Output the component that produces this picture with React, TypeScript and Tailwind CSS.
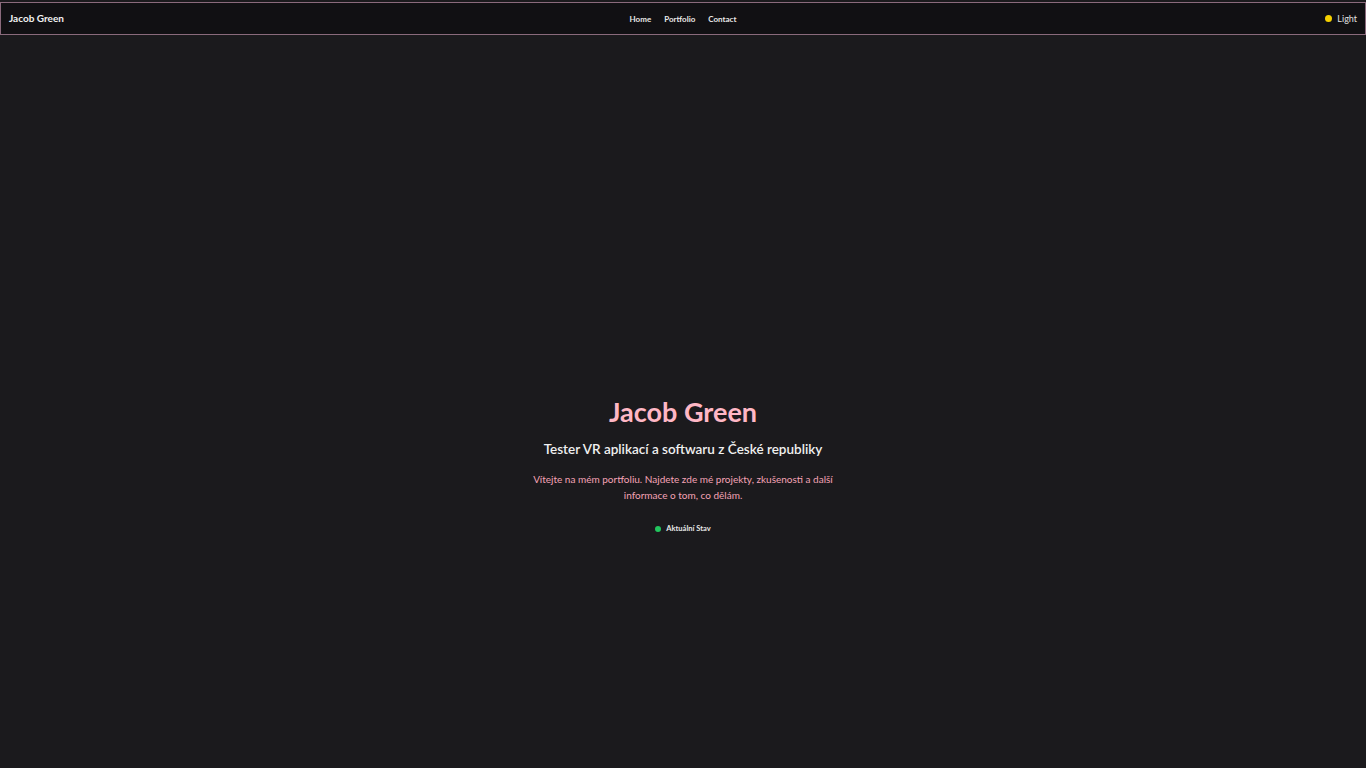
const links = ["Home", "Portfolio", "Contact"]

export default function App() {
  return (
    <div
      className="min-h-screen bg-[#1b1a1d] text-white"
      style={{ fontFamily: 'Lato, "Noto Sans", sans-serif' }}
    >
      <div className="pt-[2px]">
        <header className="h-[33px] bg-[#111013] border border-[#8a6a7c] grid grid-cols-3 items-center px-2">
          <span className="text-[10px] font-bold text-[#f2f2f2]">Jacob Green</span>
          <nav className="flex justify-center gap-[13px] text-[8px] font-bold text-[#e8e8e8]">
            {links.map((l) => (
              <a key={l} href="#">
                {l}
              </a>
            ))}
          </nav>
          <div className="flex justify-end">
            <button className="flex items-center gap-[5px] text-[9px] text-[#e0e0e0]">
              <span className="w-[7px] h-[7px] rounded-full bg-[#f5d000]" />
              Light
            </button>
          </div>
        </header>
      </div>
      <main className="flex flex-col items-center text-center pt-[359px]">
        <h1 className="text-[27px] font-bold text-[#ffb7c5] leading-[36px]">Jacob Green</h1>
        <h2 className="mt-[9px] text-[13.5px] font-semibold text-[#f0f0f0]">
          Tester VR aplikací a softwaru z České republiky
        </h2>
        <p className="mt-[12px] w-[300px] text-[10px] leading-[16px] text-[#f4a3b6]">
          Vítejte na mém portfoliu. Najdete zde mé projekty, zkušenosti a další informace o tom, co dělám.
        </p>
        <div className="mt-[20px] flex items-center gap-[5px] text-[7.5px] font-bold text-[#e8e8e8]">
          <span className="w-[6px] h-[6px] rounded-full bg-[#22c55e]" />
          Aktuální Stav
        </div>
      </main>
    </div>
  )
}
